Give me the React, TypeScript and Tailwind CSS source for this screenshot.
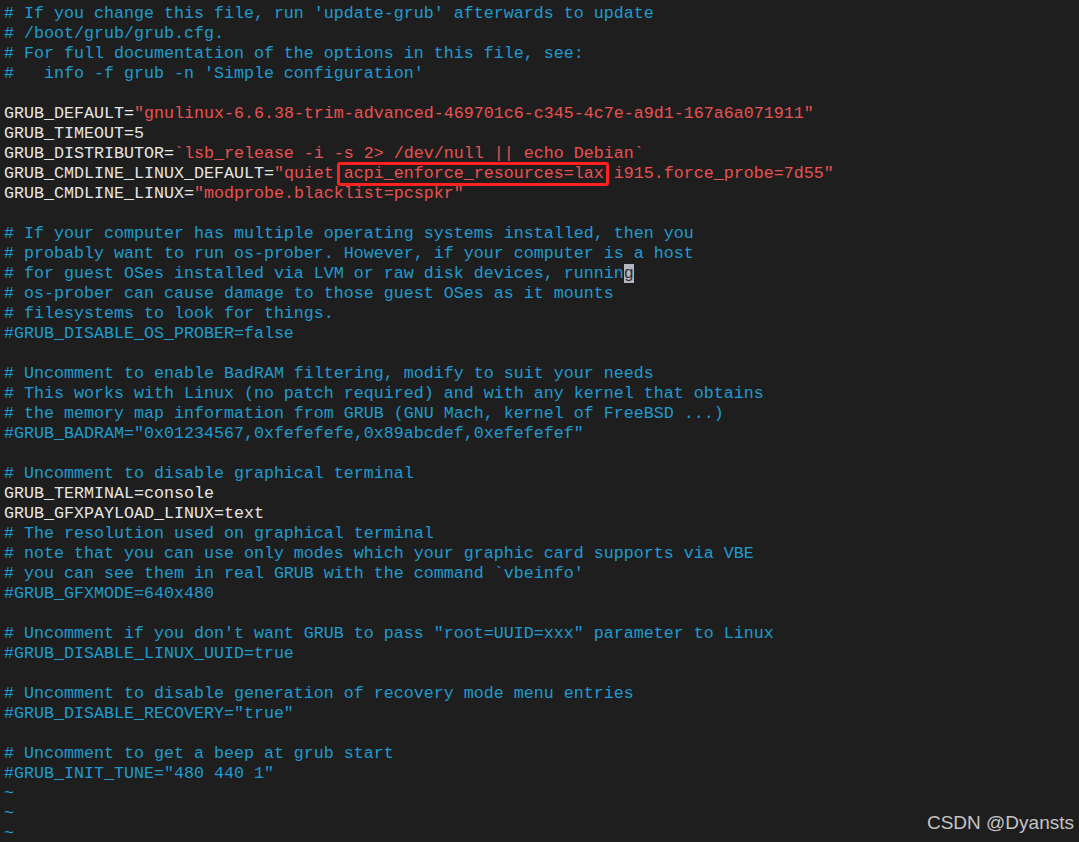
type Seg = [string, string];

const W = 'text-[#e6e6e6]';
const C = 'text-[#1f9bd1]';
const R = 'text-[#e85252]';

const lines: (Seg[] | string | null)[] = [
	"# If you change this file, run 'update-grub' afterwards to update",
	'# /boot/grub/grub.cfg.',
	'# For full documentation of the options in this file, see:',
	"#   info -f grub -n 'Simple configuration'",
	null,
	[['GRUB_DEFAULT=', W], ['"gnulinux-6.6.38-trim-advanced-469701c6-c345-4c7e-a9d1-167a6a071911"', R]],
	[['GRUB_TIMEOUT=5', W]],
	[['GRUB_DISTRIBUTOR=', W], ['`lsb_release -i -s 2> /dev/null || echo Debian`', R]],
	[['GRUB_CMDLINE_LINUX_DEFAULT=', W], ['"quiet ', R], ['BOX', R], [' i915.force_probe=7d55"', R]],
	[['GRUB_CMDLINE_LINUX=', W], ['"modprobe.blacklist=pcspkr"', R]],
	null,
	'# If your computer has multiple operating systems installed, then you',
	'# probably want to run os-prober. However, if your computer is a host',
	'CURSOR',
	'# os-prober can cause damage to those guest OSes as it mounts',
	'# filesystems to look for things.',
	'#GRUB_DISABLE_OS_PROBER=false',
	null,
	'# Uncomment to enable BadRAM filtering, modify to suit your needs',
	'# This works with Linux (no patch required) and with any kernel that obtains',
	'# the memory map information from GRUB (GNU Mach, kernel of FreeBSD ...)',
	'#GRUB_BADRAM="0x01234567,0xfefefefe,0x89abcdef,0xefefefef"',
	null,
	'# Uncomment to disable graphical terminal',
	[['GRUB_TERMINAL=console', W]],
	[['GRUB_GFXPAYLOAD_LINUX=text', W]],
	'# The resolution used on graphical terminal',
	'# note that you can use only modes which your graphic card supports via VBE',
	"# you can see them in real GRUB with the command `vbeinfo'",
	'#GRUB_GFXMODE=640x480',
	null,
	'# Uncomment if you don\'t want GRUB to pass "root=UUID=xxx" parameter to Linux',
	'#GRUB_DISABLE_LINUX_UUID=true',
	null,
	'# Uncomment to disable generation of recovery mode menu entries',
	'#GRUB_DISABLE_RECOVERY="true"',
	null,
	'# Uncomment to get a beep at grub start',
	'#GRUB_INIT_TUNE="480 440 1"',
	'~',
	'~',
	'~',
];

function Line({ line }: { line: Seg[] | string | null }) {
	if (line === null) return <div className="h-[20px]" />;
	if (line === 'CURSOR') {
		return (
			<div className={`h-[20px] ${C}`}>
				# for guest OSes installed via LVM or raw disk devices, runnin
				<span className="bg-[#b4b4c0] text-[#2a2a2a]">g</span>
			</div>
		);
	}
	if (typeof line === 'string') return <div className={`h-[20px] ${C}`}>{line}</div>;
	return (
		<div className="h-[20px]">
			{line.map(([t, c], i) =>
				t === 'BOX' ? (
					<span key={i} className={`relative ${c}`}>
						acpi_enforce_resources=lax
						<span className="absolute left-[-7px] right-[-5px] top-[-2px] bottom-[-3px] border-[3px] border-[#ff2020] rounded-[3px]" />
					</span>
				) : (
					<span key={i} className={c}>
						{t}
					</span>
				)
			)}
		</div>
	);
}

export default function App() {
	return (
		<div className="relative h-[842px] w-[1079px] overflow-hidden bg-[#1e1e1e]">
			<div
				className="pl-[4px] pt-[4px] whitespace-pre text-[16.67px] leading-[20px]"
				style={{ fontFamily: '"Liberation Mono", monospace' }}
			>
				{lines.map((l, i) => (
					<Line key={i} line={l} />
				))}
			</div>
			<div
				className="absolute right-[5px] bottom-[5px] text-[19px] text-[#c4c4c4]"
				style={{ fontFamily: '"Liberation Sans", Arial, sans-serif' }}
			>
				CSDN @Dyansts
			</div>
		</div>
	);
}
